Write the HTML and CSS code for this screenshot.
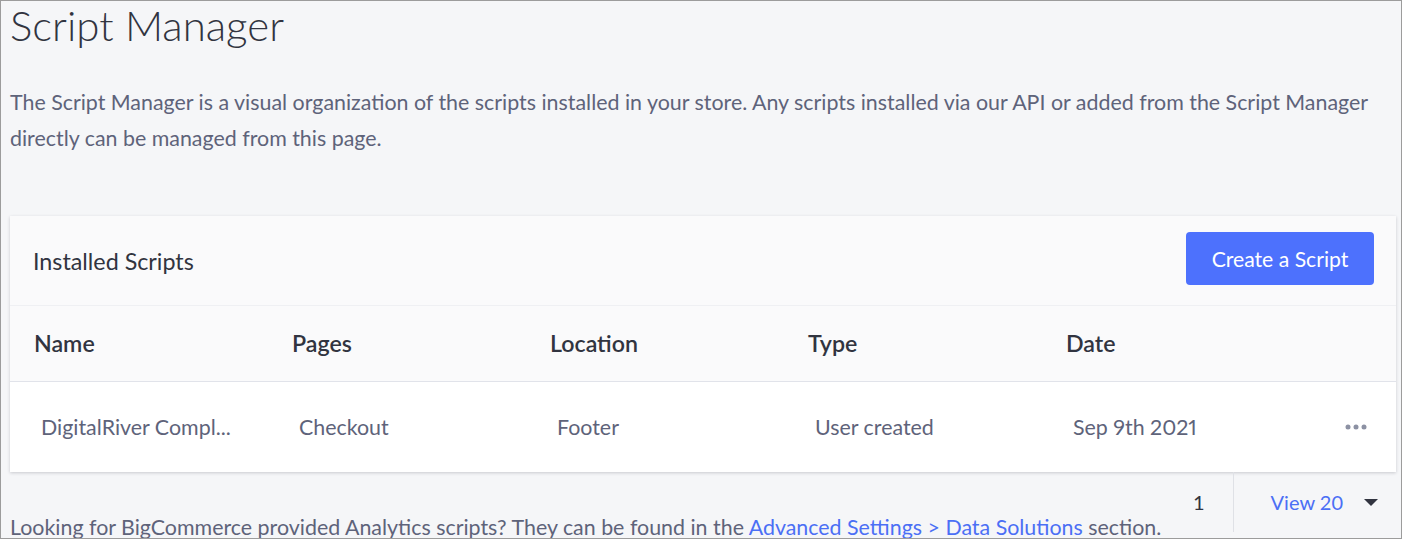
FILE: index.html
```html
<!DOCTYPE html>
<html lang="en">
<head>
<meta charset="utf-8">
<title>Script Manager</title>
<link rel="stylesheet" href="styles.css">
</head>
<body>
<div class="frame">
  <h1 class="title">Script Manager</h1>
  <p class="intro">The Script Manager is a visual organization of the scripts installed in your store. Any scripts installed via our API or added from the Script Manager directly can be managed from this page.</p>

  <section class="card">
    <header class="card-head">
      <h2 class="card-title">Installed Scripts</h2>
      <button class="btn-primary" type="button">Create a Script</button>
    </header>
    <div class="table">
      <div class="row row-head">
        <div class="cell">Name</div>
        <div class="cell">Pages</div>
        <div class="cell">Location</div>
        <div class="cell">Type</div>
        <div class="cell">Date</div>
        <div class="cell"></div>
      </div>
      <div class="row row-body">
        <div class="cell">DigitalRiver Compl...</div>
        <div class="cell">Checkout</div>
        <div class="cell">Footer</div>
        <div class="cell">User created</div>
        <div class="cell cell-date">Sep 9th 2021</div>
        <div class="cell cell-actions">
          <svg class="dots" width="22" height="6" viewBox="0 0 22 6" aria-hidden="true">
            <circle cx="3" cy="3" r="2.5"/>
            <circle cx="11" cy="3" r="2.5"/>
            <circle cx="19" cy="3" r="2.5"/>
          </svg>
        </div>
      </div>
    </div>
  </section>

  <div class="footer">
    <p class="note">Looking for BigCommerce provided Analytics scripts? They can be found in the <a class="link" href="#">Advanced Settings &gt; Data Solutions</a> section.</p>
    <nav class="pager">
      <span class="page-num">1</span>
      <span class="pager-divider"></span>
      <span class="view">View 20</span>
      <svg class="caret" width="14" height="7" viewBox="0 0 14 7" aria-hidden="true">
        <path d="M0 0 H14 L7 7 Z"/>
      </svg>
    </nav>
  </div>
</div>
</body>
</html>
```

FILE: styles.css
```css
html, body {
  margin: 0;
  padding: 0;
  background: #ffffff;
}

.frame {
  box-sizing: border-box;
  width: 1402px;
  height: 539px;
  border: 1px solid #9c9c9c;
  background: #f5f6f8;
  padding: 0 5px 0 9px;
  overflow: hidden;
  font-family: "Lato", "Liberation Sans", sans-serif;
  color: #5e637a;
}

.title {
  margin: 0;
  font-size: 42px;
  line-height: 48px;
  font-weight: 300;
  color: #313440;
}

.intro {
  margin: 35px 0 0 0;
  font-size: 21.4px;
  line-height: 36px;
  color: #5e637a;
}

.card {
  margin-top: 60px;
  background: #ffffff;
  box-shadow: 0 1px 3px rgba(49, 52, 64, 0.22);
}

.card-head {
  box-sizing: border-box;
  height: 90px;
  display: flex;
  align-items: center;
  justify-content: space-between;
  padding: 16px 22px 20px 23px;
  background: #fafafb;
  border-bottom: 1px solid #eff0f3;
}

.card-title {
  margin: 0;
  padding-top: 4px;
  font-size: 23.3px;
  line-height: 28px;
  font-weight: 400;
  color: #313440;
}

.btn-primary {
  height: 53px;
  width: 188px;
  border: 0;
  border-radius: 4px;
  background: #4d71fd;
  color: #ffffff;
  font-family: inherit;
  font-size: 21.2px;
  font-weight: 400;
  padding: 0;
  cursor: pointer;
}

.row {
  display: grid;
  grid-template-columns: repeat(5, 258px) 1fr;
  align-items: center;
  box-sizing: border-box;
}

.row-head {
  height: 76px;
  padding-left: 24px;
  padding-bottom: 2px;
  background: #fafafb;
  border-bottom: 1px solid #e1e3ea;
  font-size: 23.2px;
  font-weight: 600;
  color: #313440;
}

.row-body {
  height: 90px;
  padding-left: 31px;
  background: #ffffff;
  font-size: 21.4px;
  color: #5e637a;
}

.cell {
  white-space: nowrap;
}

.cell-date {
  font-variant-numeric: proportional-nums;
}

.cell-actions {
  display: flex;
  justify-content: flex-end;
  padding-right: 29px;
}

.dots {
  display: block;
  fill: #8c91a3;
}

.footer {
  display: flex;
  justify-content: space-between;
  align-items: flex-start;
}

.note {
  margin: 0;
  padding-top: 37px;
  font-size: 21.4px;
  line-height: 36px;
  color: #5e637a;
  white-space: nowrap;
}

.link {
  color: #4b6ff5;
  text-decoration: none;
}

.pager {
  display: flex;
  align-items: center;
  height: 60px;
  padding-right: 18px;
  font-size: 20px;
}

.page-num {
  color: #313440;
  padding-right: 28px;
}

.pager-divider {
  align-self: stretch;
  width: 1px;
  background: #dfe1e6;
}

.view {
  color: #4b6ff5;
  padding-left: 37px;
  padding-right: 21px;
}

.caret {
  display: block;
  fill: #313440;
}
```
